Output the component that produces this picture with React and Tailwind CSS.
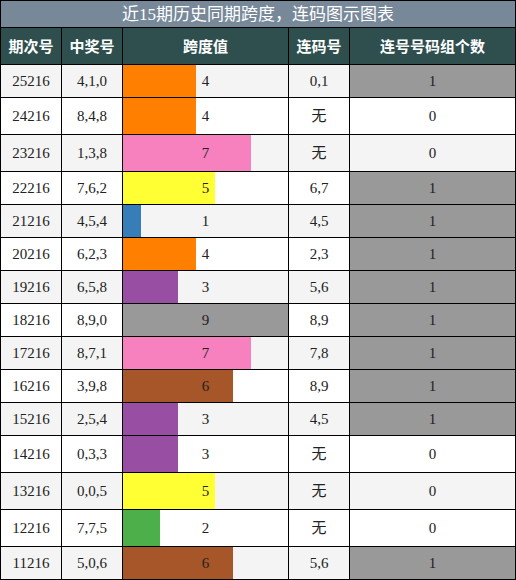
import React from "react";

const rows = [
  ["25216", "4,1,0", 4, "0,1", 1],
  ["24216", "8,4,8", 4, "无", 0],
  ["23216", "1,3,8", 7, "无", 0],
  ["22216", "7,6,2", 5, "6,7", 1],
  ["21216", "4,5,4", 1, "4,5", 1],
  ["20216", "6,2,3", 4, "2,3", 1],
  ["19216", "6,5,8", 3, "5,6", 1],
  ["18216", "8,9,0", 9, "8,9", 1],
  ["17216", "8,7,1", 7, "7,8", 1],
  ["16216", "3,9,8", 6, "8,9", 1],
  ["15216", "2,5,4", 3, "4,5", 1],
  ["14216", "0,3,3", 3, "无", 0],
  ["13216", "0,0,5", 5, "无", 0],
  ["12216", "7,7,5", 2, "无", 0],
  ["11216", "5,0,6", 6, "5,6", 1],
];

const barColors = {
  1: "bg-[#377eb8]",
  2: "bg-[#4daf4a]",
  3: "bg-[#984ea3]",
  4: "bg-[#ff7f00]",
  5: "bg-[#ffff33]",
  6: "bg-[#a65628]",
  7: "bg-[#f781bf]",
  8: "bg-[#999999]",
  9: "bg-[#999999]",
};

const headers = ["期次号", "中奖号", "跨度值", "连码号", "连号号码组个数"];

function App() {
  return (
    <div className="w-[516px] bg-white font-['Liberation_Serif','Noto_Sans_CJK_SC',serif] text-[15px] text-[#222]">
      <div className="grid grid-cols-[60px_60px_165px_60px_165px] gap-px bg-black p-px">
        {/* title */}
        <div className="col-span-5 h-[26px] bg-[#778899] text-white text-[17px] flex items-center justify-center leading-none">
          近15期历史同期跨度，连码图示图表
        </div>

        {/* header */}
        {headers.map((h) => (
          <div
            key={h}
            className="h-[36px] bg-[#2f4f4f] text-white font-bold font-['Noto_Sans_CJK_SC',sans-serif] text-[15px] flex items-center justify-center"
          >
            {h}
          </div>
        ))}

        {/* data rows */}
        {rows.map(([issue, nums, span, lian, count], i) => {
          const bg = i % 2 === 0 ? "bg-[#f4f4f4]" : "bg-white";
          const h = lian === "无" ? "h-[36px]" : "h-[32px]";
          return (
            <React.Fragment key={issue}>
              <div className={`${h} ${bg} flex items-center justify-center`}>{issue}</div>
              <div className={`${h} ${bg} flex items-center justify-center`}>{nums}</div>
              <div className={`${h} ${bg} relative flex items-center justify-center`}>
                <div
                  className={`absolute left-0 top-0 bottom-0 ${barColors[span]}`}
                  style={{ width: `${(span / 9) * 165}px` }}
                />
                <span className="relative">{span}</span>
              </div>
              <div className={`${h} ${bg} flex items-center justify-center`}>{lian}</div>
              <div
                className={`${h} ${count ? "bg-[#999999]" : bg} flex items-center justify-center`}
              >
                {count}
              </div>
            </React.Fragment>
          );
        })}
      </div>
    </div>
  );
}

export default App;
